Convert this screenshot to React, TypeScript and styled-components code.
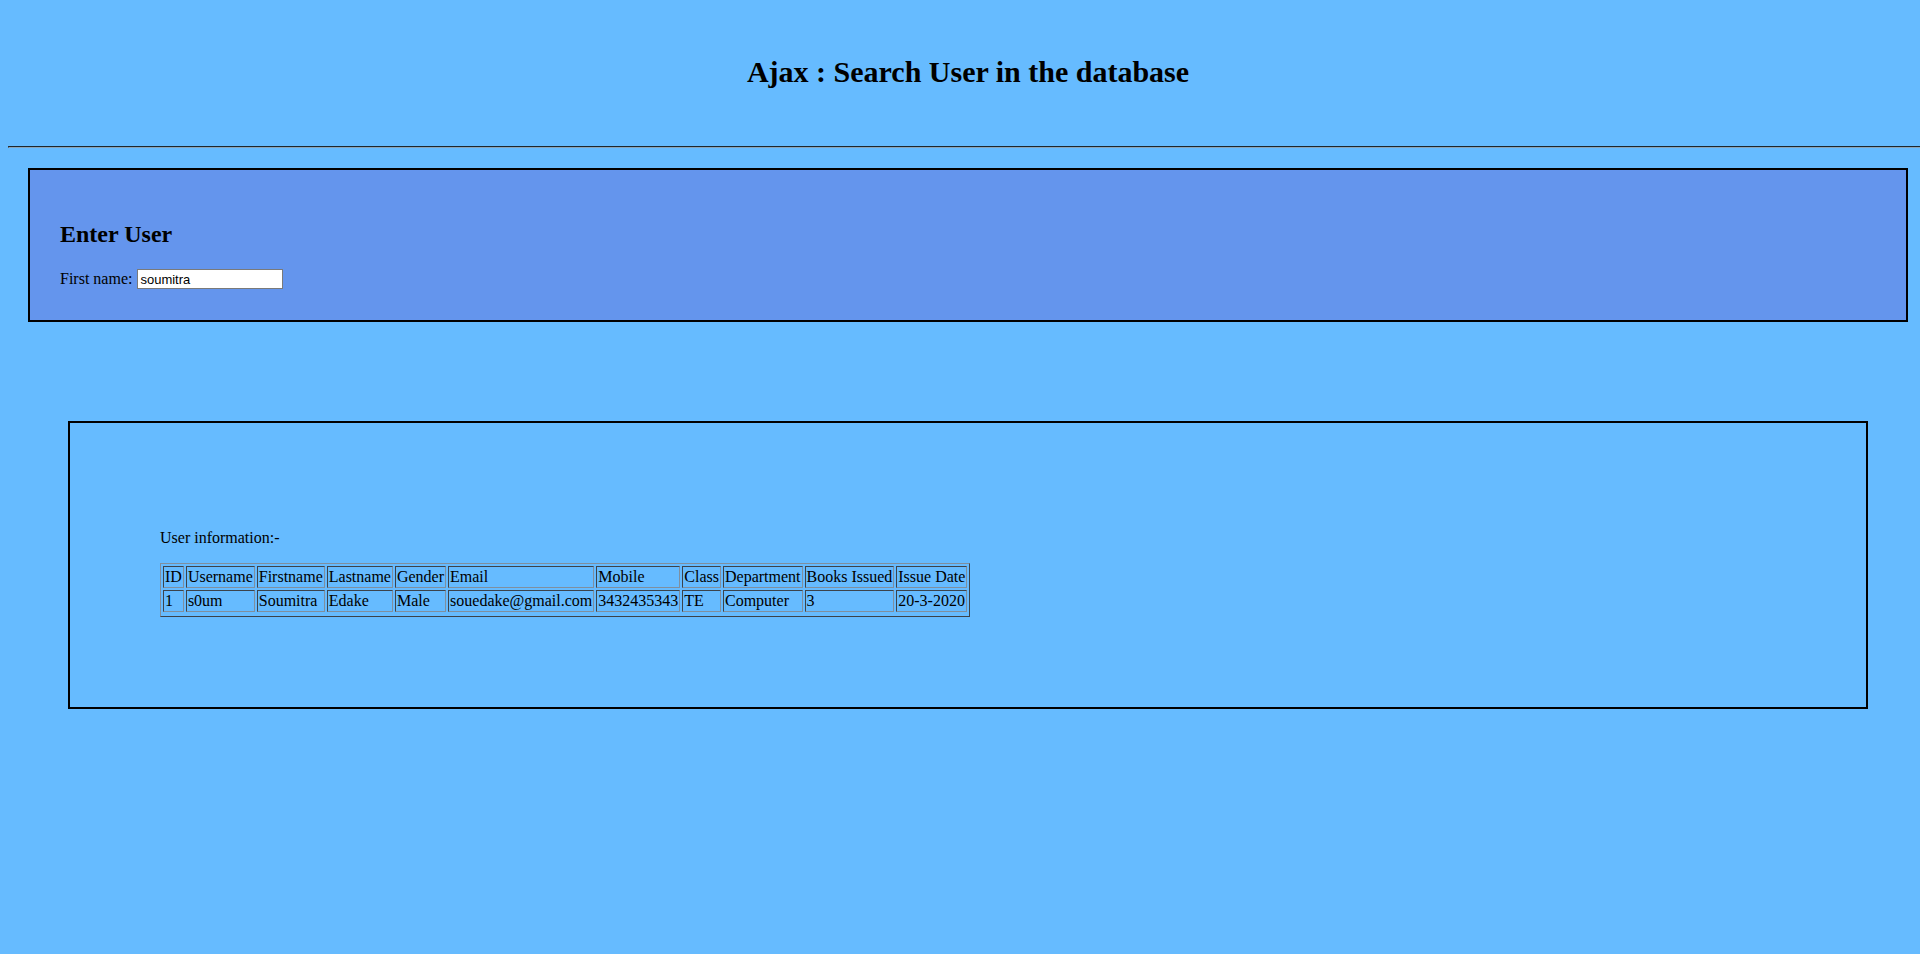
import React from "react";
import styled, { createGlobalStyle } from "styled-components";

const GlobalStyle = createGlobalStyle`
  html {
    overflow-x: hidden;
  }
  body {
    margin: 8px;
    width: 1920px;
    background: #66bbff;
    color: #000;
    font-family: "Liberation Serif", "Times New Roman", serif;
    font-size: 16px;
  }
`;

const Header = styled.header`
  padding: 45px 0 48px;
  text-align: center;
`;

const Title = styled.h1`
  margin: 0;
  font-size: 30px;
  font-weight: bold;
  line-height: 37px;
`;

const Rule = styled.hr`
  margin: 8px 0 20px;
  border: 1px inset #8a8a8a;
  border-top-color: #5a6f80;
  border-bottom-color: #8aa4b8;
  height: 0;
`;

const SearchPanel = styled.section`
  margin: 0 20px;
  padding: 30px;
  border: 2px solid #000;
  background: #6495ed;
`;

const PanelTitle = styled.h2`
  margin: 20px 0;
  font-size: 24px;
  font-weight: bold;
  line-height: 28px;
`;

const Field = styled.label`
  display: flex;
  align-items: center;
  gap: 5px;
  height: 22px;
`;

const TextInput = styled.input`
  box-sizing: border-box;
  width: 146px;
  height: 20px;
  margin: 0;
  padding: 1px 2px;
  border: 1px solid #7a7a7a;
  background: #fff;
  font-family: "Liberation Sans", Arial, sans-serif;
  font-size: 13px;
  color: #000;
  outline: none;
`;

const ResultPanel = styled.section`
  margin: 99px 60px 0;
  padding: 90px;
  border: 2px solid #000;
`;

const Caption = styled.p`
  margin: 16px 0;
  line-height: 18px;
`;

const InfoTable = styled.table`
  border: 1px outset #7f8f9f;
  border-spacing: 2px;
  padding-bottom: 2px;
`;

const Cell = styled.td`
  border: 1px inset #7f8f9f;
  padding: 1px;
  line-height: 18px;
  white-space: nowrap;
  text-align: left;
  font-weight: normal;
`;

const HeadCell = styled(Cell).attrs({ as: "th" })``;

const headers = [
  "ID",
  "Username",
  "Firstname",
  "Lastname",
  "Gender",
  "Email",
  "Mobile",
  "Class",
  "Department",
  "Books Issued",
  "Issue Date",
];

const row = [
  "1",
  "s0um",
  "Soumitra",
  "Edake",
  "Male",
  "souedake@gmail.com",
  "3432435343",
  "TE",
  "Computer",
  "3",
  "20-3-2020",
];

export default function App() {
  return (
    <>
      <GlobalStyle />
      <Header>
        <Title>Ajax : Search User in the database</Title>
      </Header>
      <Rule />
      <SearchPanel>
        <PanelTitle>Enter User</PanelTitle>
        <Field>
          First name:
          <TextInput type="text" defaultValue="soumitra" />
        </Field>
      </SearchPanel>
      <ResultPanel>
        <Caption>User information:-</Caption>
        <InfoTable>
          <tbody>
            <tr>
              {headers.map((h) => (
                <HeadCell key={h}>{h}</HeadCell>
              ))}
            </tr>
            <tr>
              {row.map((c, i) => (
                <Cell key={i}>{c}</Cell>
              ))}
            </tr>
          </tbody>
        </InfoTable>
      </ResultPanel>
    </>
  );
}
